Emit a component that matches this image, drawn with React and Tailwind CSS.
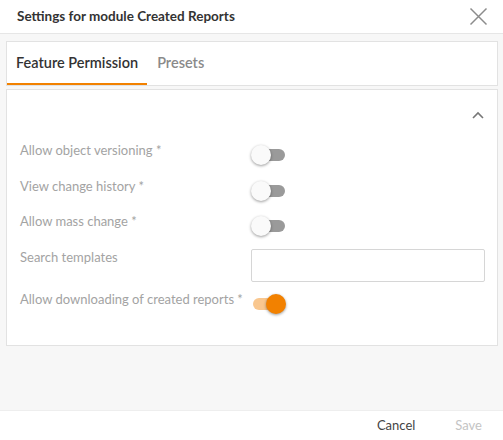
import React, { useState } from 'react';

const Toggle = ({ on }) => (
  <div className="relative w-[36px] h-[20px]">
    <div
      className={`absolute left-[2px] top-[4px] w-[32px] h-[12px] rounded-full ${on ? 'bg-[#f9c78f]' : 'bg-[#9a9a9a]'}`}
    />
    <div
      className={`absolute top-0 w-[20px] h-[20px] rounded-full shadow-[0_1px_3px_rgba(0,0,0,0.4)] ${on ? 'left-[15px] bg-[#f28100]' : 'left-0 bg-[#fafafa]'}`}
    />
  </div>
);

const rows = [
  { label: 'Allow object versioning *', type: 'toggle', on: false, h: 'h-[36px]' },
  { label: 'View change history *', type: 'toggle', on: false, h: 'h-[35px]' },
  { label: 'Allow mass change *', type: 'toggle', on: false, h: 'h-[36px]' },
  { label: 'Search templates', type: 'input', h: 'h-[42px]' },
  { label: 'Allow downloading of created reports *', type: 'toggle', on: true, h: 'h-[36px]' },
];

export default function App() {
  const [tab, setTab] = useState('feature');

  return (
    <div className="w-[503px] h-[440px] flex flex-col bg-white text-[#333] font-['Lato','Liberation_Sans',sans-serif]">
      {/* Header */}
      <div className="h-[34px] shrink-0 flex items-center justify-between pl-[17px] pr-[15px] border-b border-[#e6e6e6]">
        <span className="text-[13.5px] font-bold text-[#333]">Settings for module Created Reports</span>
        <svg width="19" height="19" viewBox="0 0 19 19" className="text-[#8c8c8c]">
          <path d="M1.5 1.5L17.5 17.5M17.5 1.5L1.5 17.5" stroke="currentColor" strokeWidth="1.5" fill="none" />
        </svg>
      </div>

      {/* Body */}
      <div className="flex-1 bg-[#f7f7f7] pl-[6px] pr-[5px] pt-[7px]">
        {/* Tabs */}
        <div className="h-[45px] bg-white border border-[#e2e2e2] flex items-end">
          <button
            onClick={() => setTab('feature')}
            className={`h-full px-[9px] text-[14.5px] font-semibold flex items-center border-b-2 ${tab === 'feature' ? 'border-[#f28100] text-[#333]' : 'border-transparent text-[#8a8a8a]'}`}
          >
            Feature Permission
          </button>
          <button
            onClick={() => setTab('presets')}
            className={`h-full px-[10px] text-[14.5px] font-semibold flex items-center border-b-2 ${tab === 'presets' ? 'border-[#f28100] text-[#333]' : 'border-transparent text-[#8a8a8a]'}`}
          >
            Presets
          </button>
        </div>

        {/* Content card */}
        <div className="mt-[3px] h-[257px] bg-white border border-[#e2e2e2] pl-[13px] pr-[12px]">
          <div className="h-[50px] flex items-center justify-end pr-[1px]">
            <svg width="12" height="8" viewBox="0 0 12 8" className="text-[#777]">
              <path d="M1 7L6 2L11 7" stroke="currentColor" strokeWidth="1.6" fill="none" />
            </svg>
          </div>

          {rows.map((r) => (
            <div key={r.label} className={`flex items-start ${r.h}`}>
              <div className="w-[231px] shrink-0 text-[13px] leading-[18px] pt-[1px] text-[#a3a3a3]">{r.label}</div>
              {r.type === 'toggle' ? (
                <div className="mt-[5px]">
                  <Toggle on={r.on} />
                </div>
              ) : (
                <input className="mt-[2px] w-[234px] h-[33px] border border-[#d6d6d6] rounded-[2px] outline-none px-2 text-[13px]" />
              )}
            </div>
          ))}
        </div>
      </div>

      {/* Footer */}
      <div className="h-[30px] shrink-0 border-t border-[#eeeeee] flex items-center justify-end gap-[40px] pr-[21px] text-[13px]">
        <span className="text-[#444]">Cancel</span>
        <span className="text-[#c4c4c4]">Save</span>
      </div>
    </div>
  );
}
